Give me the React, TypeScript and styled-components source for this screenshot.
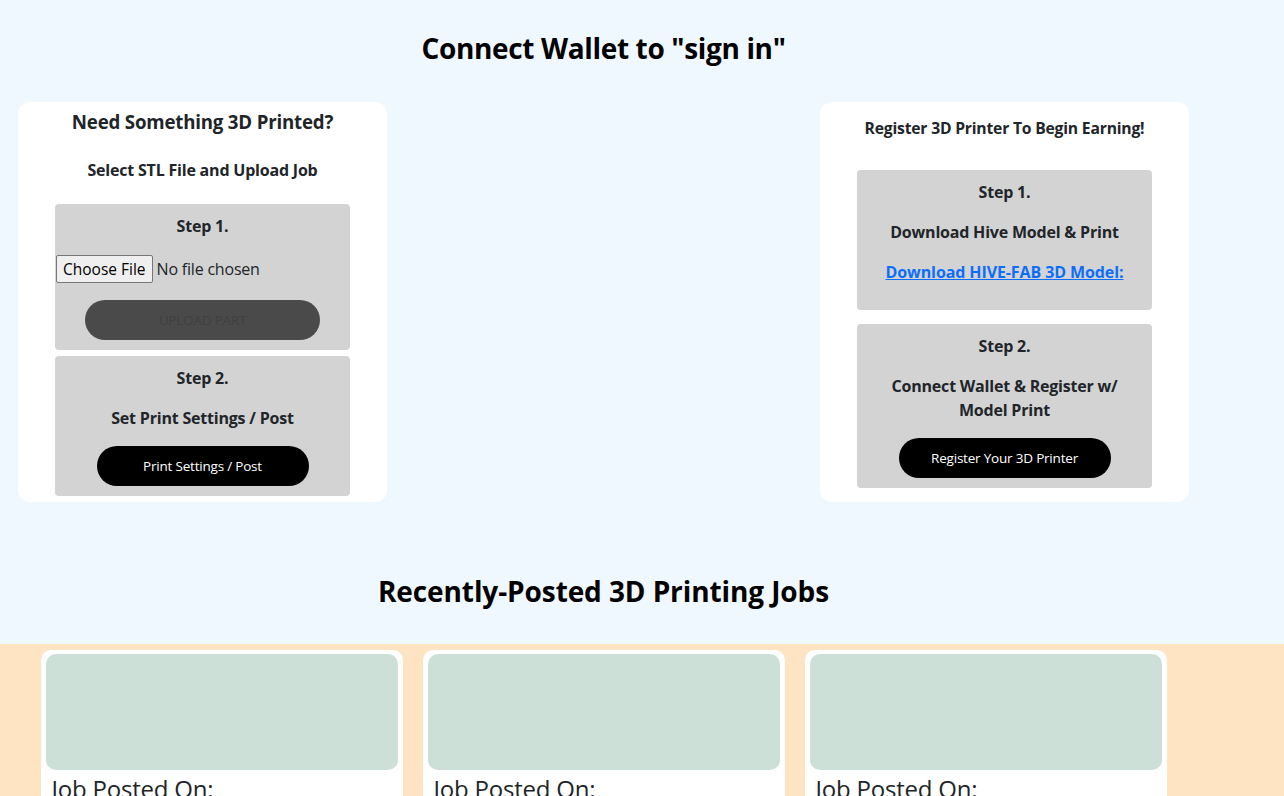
import React from "react";
import styled, { createGlobalStyle } from "styled-components";

const Global = createGlobalStyle`
  html, body { margin: 0; padding: 0; }
  body {
    background: #f0f8ff;
    font-family: "Open Sans", "Noto Sans", "Liberation Sans", sans-serif;
    color: #212529;
    font-size: 16px;
    line-height: 1.5;
  }
  * { box-sizing: border-box; }
`;

const Page = styled.div`
  display: flex;
  flex-direction: column;
`;

const Container = styled.div`
  width: 1207px;
`;

const Title = styled.h2<{ $top: number; $bottom: number; $ls: number }>`
  margin: ${(p) => p.$top}px 0 ${(p) => p.$bottom}px;
  text-align: center;
  font-size: 28px;
  line-height: 34px;
  font-weight: 700;
  color: #000;
  letter-spacing: ${(p) => p.$ls}px;
`;

const Row = styled.div`
  display: flex;
  justify-content: space-between;
  align-items: flex-start;
  padding: 0 18px;
`;

const Card = styled.div<{ $pt: number; $pb: number }>`
  width: 369px;
  height: 400px;
  background: #fff;
  border-radius: 12px;
  padding: ${(p) => p.$pt}px 37px ${(p) => p.$pb}px;
  display: flex;
  flex-direction: column;
  align-items: stretch;
`;

const CardHead = styled.div<{ $size: number; $mb: number }>`
  text-align: center;
  font-weight: 700;
  font-size: ${(p) => p.$size}px;
  line-height: 24px;
  margin-bottom: ${(p) => p.$mb}px;
  letter-spacing: -0.2px;
`;

const Step = styled.div<{ $mb: number; $pb: number }>`
  background: #d3d3d3;
  border-radius: 4px;
  padding: 12px 0 ${(p) => p.$pb}px;
  margin-bottom: ${(p) => p.$mb}px;
  display: flex;
  flex-direction: column;
  align-items: center;
`;

const StepText = styled.div<{ $mb: number }>`
  font-weight: 700;
  font-size: 16px;
  line-height: 20px;
  text-align: center;
  margin-bottom: ${(p) => p.$mb}px;
  letter-spacing: -0.2px;
`;

const WrapText = styled(StepText)`
  line-height: 24px;
  width: 250px;
`;

const FileInput = styled.input`
  align-self: flex-start;
  margin: 0 0 17px 1px;
  font-family: inherit;
  font-size: 16px;
  line-height: 20px;
  color: #212529;
  letter-spacing: -0.2px;
  &::file-selector-button {
    font-family: inherit;
    font-size: 15.5px;
    height: 28px;
    padding: 0 6px;
    margin-right: 4px;
    background: #efefef;
    border: 1px solid #767676;
    border-radius: 2px;
    color: #000;
  }
`;

const Pill = styled.button<{ $w: number; $bg: string; $fg: string }>`
  width: ${(p) => p.$w}px;
  height: 40px;
  border: none;
  border-radius: 20px;
  background: ${(p) => p.$bg};
  color: ${(p) => p.$fg};
  font-family: inherit;
  font-size: 13.5px;
  letter-spacing: -0.2px;
  cursor: pointer;
  padding: 0;
`;

const Link = styled.a`
  color: #0d6efd;
  font-weight: 700;
  font-size: 16px;
  line-height: 20px;
  text-decoration: underline;
  letter-spacing: -0.1px;
`;

const Band = styled.div`
  background: #ffe4c4;
  padding-top: 6px;
`;

const Jobs = styled.div`
  width: 1207px;
  display: flex;
  justify-content: center;
  gap: 20px;
`;

const JobCard = styled.div`
  width: 362px;
  background: #fff;
  border-radius: 10px;
  padding: 4px 5px 12px;
`;

const JobImage = styled.div`
  height: 116px;
  background: #cde0d7;
  border-radius: 10px;
`;

const JobLabel = styled.div`
  font-size: 24px;
  line-height: 32px;
  margin: 3px 0 0 6px;
  letter-spacing: -0.2px;
`;

export default function App() {
  return (
    <>
      <Global />
      <Page>
        <Container>
          <Title $top={31} $bottom={37} $ls={-0.35}>Connect Wallet to "sign in"</Title>
          <Row>
            <Card $pt={8} $pb={6}>
              <CardHead $size={18.7} $mb={26}>Need Something 3D Printed?</CardHead>
              <StepText $mb={24}>Select STL File and Upload Job</StepText>
              <Step $mb={6} $pb={10}>
                <StepText $mb={19}>Step 1.</StepText>
                <FileInput type="file" />
                <Pill $w={235} $bg="#4a4a4a" $fg="#404040" disabled>UPLOAD PART</Pill>
              </Step>
              <Step $mb={0} $pb={10}>
                <StepText $mb={20}>Step 2.</StepText>
                <StepText $mb={18}>Set Print Settings / Post</StepText>
                <Pill $w={212} $bg="#000" $fg="#fff">Print Settings / Post</Pill>
              </Step>
            </Card>
            <Card $pt={14} $pb={14}>
              <CardHead $size={15.7} $mb={30}>Register 3D Printer To Begin Earning!</CardHead>
              <Step $mb={14} $pb={28}>
                <StepText $mb={20}>Step 1.</StepText>
                <StepText $mb={20}>Download Hive Model &amp; Print</StepText>
                <Link href="#">Download HIVE-FAB 3D Model:</Link>
              </Step>
              <Step $mb={0} $pb={10}>
                <StepText $mb={18}>Step 2.</StepText>
                <WrapText $mb={16}>Connect Wallet &amp; Register w/ Model Print</WrapText>
                <Pill $w={212} $bg="#000" $fg="#fff">Register Your 3D Printer</Pill>
              </Step>
            </Card>
          </Row>
          <Title $top={72} $bottom={36} $ls={-0.1}>Recently-Posted 3D Printing Jobs</Title>
        </Container>
        <Band>
          <Jobs>
            {[0, 1, 2].map((i) => (
              <JobCard key={i}>
                <JobImage />
                <JobLabel>Job Posted On:</JobLabel>
              </JobCard>
            ))}
          </Jobs>
        </Band>
      </Page>
    </>
  );
}
